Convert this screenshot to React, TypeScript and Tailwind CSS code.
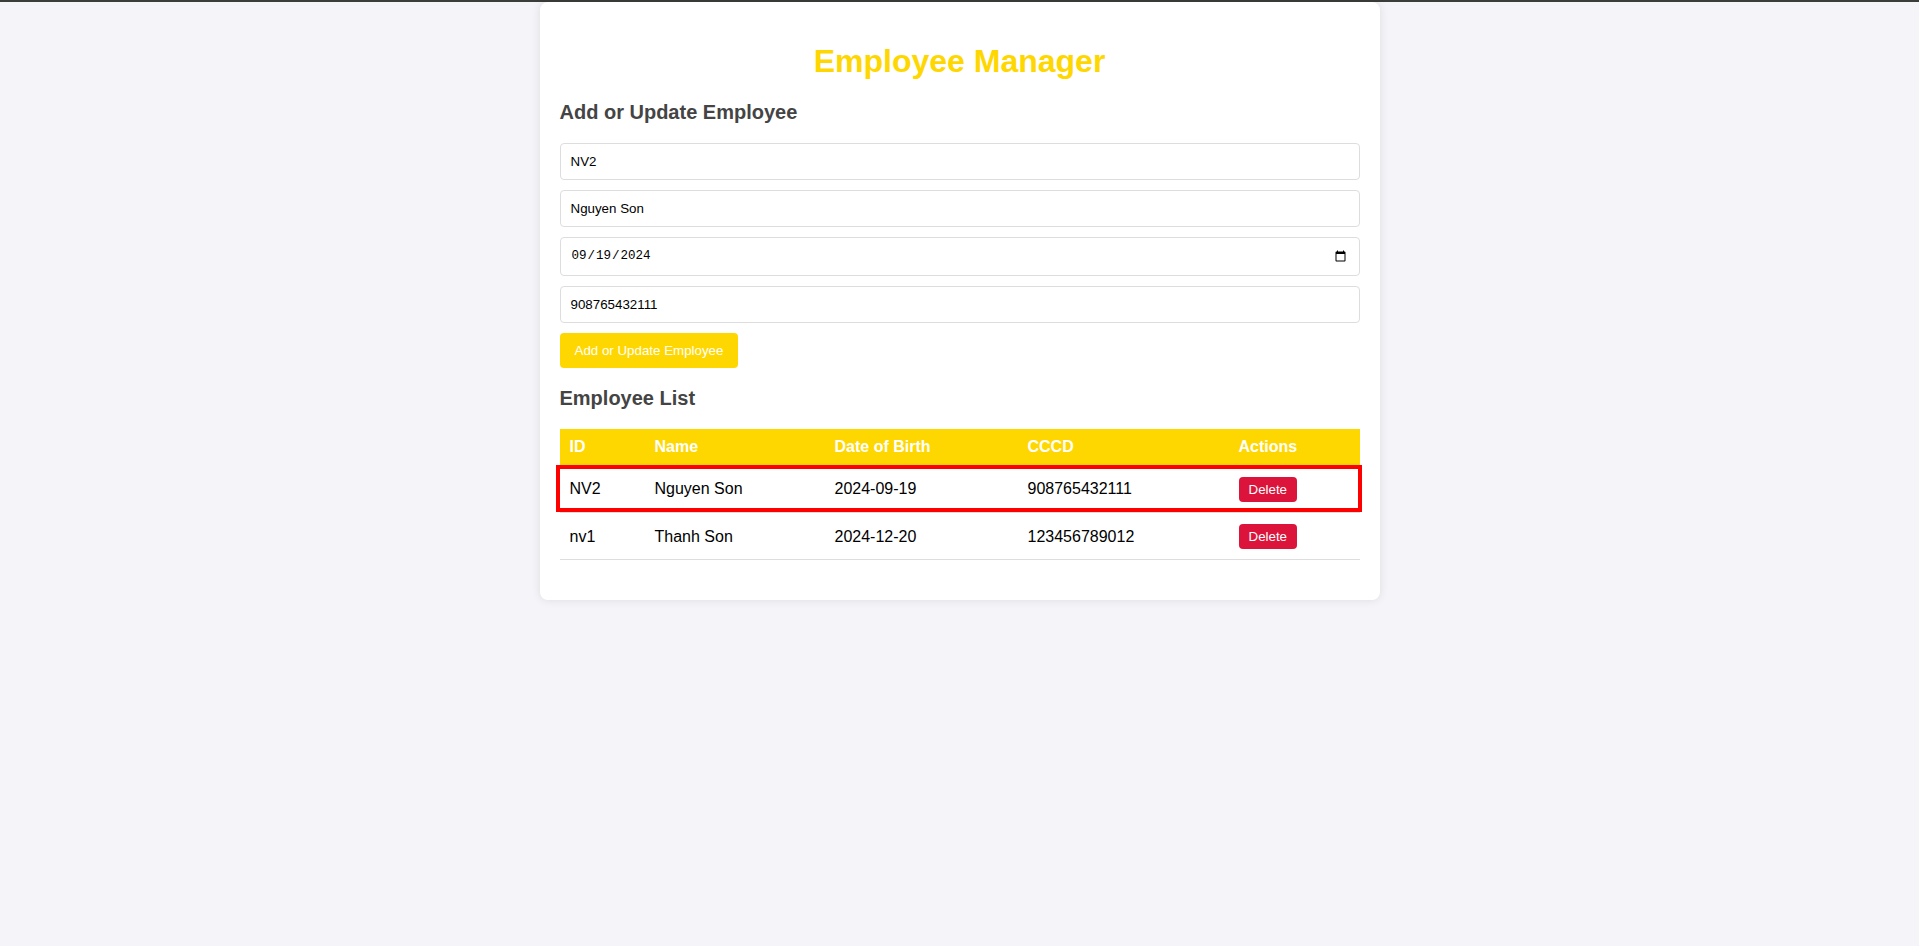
import React from "react";

type Employee = {
  id: string;
  name: string;
  dob: string;
  cccd: string;
};

const employees: Employee[] = [
  { id: "NV2", name: "Nguyen Son", dob: "2024-09-19", cccd: "908765432111" },
  { id: "nv1", name: "Thanh Son", dob: "2024-12-20", cccd: "123456789012" },
];

export default function App() {
  return (
    <div className="min-h-screen bg-[#f4f4f9] font-['Liberation_Sans',Arial,sans-serif]">
      <div className="h-[2px] bg-[#3b3d3a]"></div>
      <div className="mx-auto w-[840px] rounded-lg bg-white p-[20px] shadow-[0_0_10px_rgba(0,0,0,0.1)]">
        <h1 className="mt-[21px] text-center text-[32px] leading-[37px] font-bold text-[#FFD700]">
          Employee Manager
        </h1>
        <h2 className="mt-[21px] mb-[19px] text-[20px] leading-[23px] font-bold text-[#444]">
          Add or Update Employee
        </h2>
        <form className="flex flex-col" onSubmit={(e) => e.preventDefault()}>
          <input
            defaultValue="NV2"
            placeholder="Employee ID"
            className="mb-[10px] h-[37px] w-full rounded-[4px] border border-[#ddd] px-[10px] text-[13.33px] text-black outline-none"
          />
          <input
            defaultValue="Nguyen Son"
            placeholder="Name"
            className="mb-[10px] h-[37px] w-full rounded-[4px] border border-[#ddd] px-[10px] text-[13.33px] text-black outline-none"
          />
          <input
            type="date"
            defaultValue="2024-09-19"
            className="mb-[10px] h-[39px] w-full rounded-[4px] border border-[#ddd] px-[10px] font-['Liberation_Mono',monospace] text-[12.5px] text-black outline-none"
          />
          <input
            defaultValue="908765432111"
            placeholder="CCCD"
            className="mb-[10px] h-[37px] w-full rounded-[4px] border border-[#ddd] px-[10px] text-[13.33px] text-black outline-none"
          />
          <div>
            <button
              type="submit"
              className="h-[35px] rounded-[4px] bg-[#FFD700] px-[15px] text-[13.33px] text-white"
            >
              Add or Update Employee
            </button>
          </div>
        </form>
        <h2 className="mt-[19px] mb-[19px] text-[20px] leading-[23px] font-bold text-[#444]">
          Employee List
        </h2>
        <div className="relative mb-[20px]">
          <table className="w-full table-fixed border-collapse text-[16px] text-black">
            <colgroup>
              <col className="w-[85px]" />
              <col className="w-[180px]" />
              <col className="w-[193px]" />
              <col className="w-[211px]" />
              <col className="w-[131px]" />
            </colgroup>
            <thead>
              <tr className="bg-[#FFD700] text-white">
                <th className="h-[36px] px-[10px] text-left font-bold">ID</th>
                <th className="h-[36px] px-[10px] text-left font-bold">Name</th>
                <th className="h-[36px] px-[10px] text-left font-bold">Date of Birth</th>
                <th className="h-[36px] px-[10px] text-left font-bold">CCCD</th>
                <th className="h-[36px] px-[10px] text-left font-bold">Actions</th>
              </tr>
            </thead>
            <tbody>
              {employees.map((emp) => (
                <tr key={emp.id} className="border-b border-[#ddd]">
                  <td className="h-[47px] px-[10px] pt-[2px]">{emp.id}</td>
                  <td className="h-[47px] px-[10px] pt-[2px]">{emp.name}</td>
                  <td className="h-[47px] px-[10px] pt-[2px]">{emp.dob}</td>
                  <td className="h-[47px] px-[10px] pt-[2px]">{emp.cccd}</td>
                  <td className="h-[47px] px-[10px] pt-[2px]">
                    <button className="h-[25px] rounded-[4px] bg-[#DC143C] px-[10px] text-[13.33px] text-white">
                      Delete
                    </button>
                  </td>
                </tr>
              ))}
            </tbody>
          </table>
          {/* red highlight drawn over the first row */}
          <div className="pointer-events-none absolute top-[36px] left-[-4px] h-[47px] w-[806px] border-[4px] border-[#ff0000]"></div>
        </div>
      </div>
    </div>
  );
}
